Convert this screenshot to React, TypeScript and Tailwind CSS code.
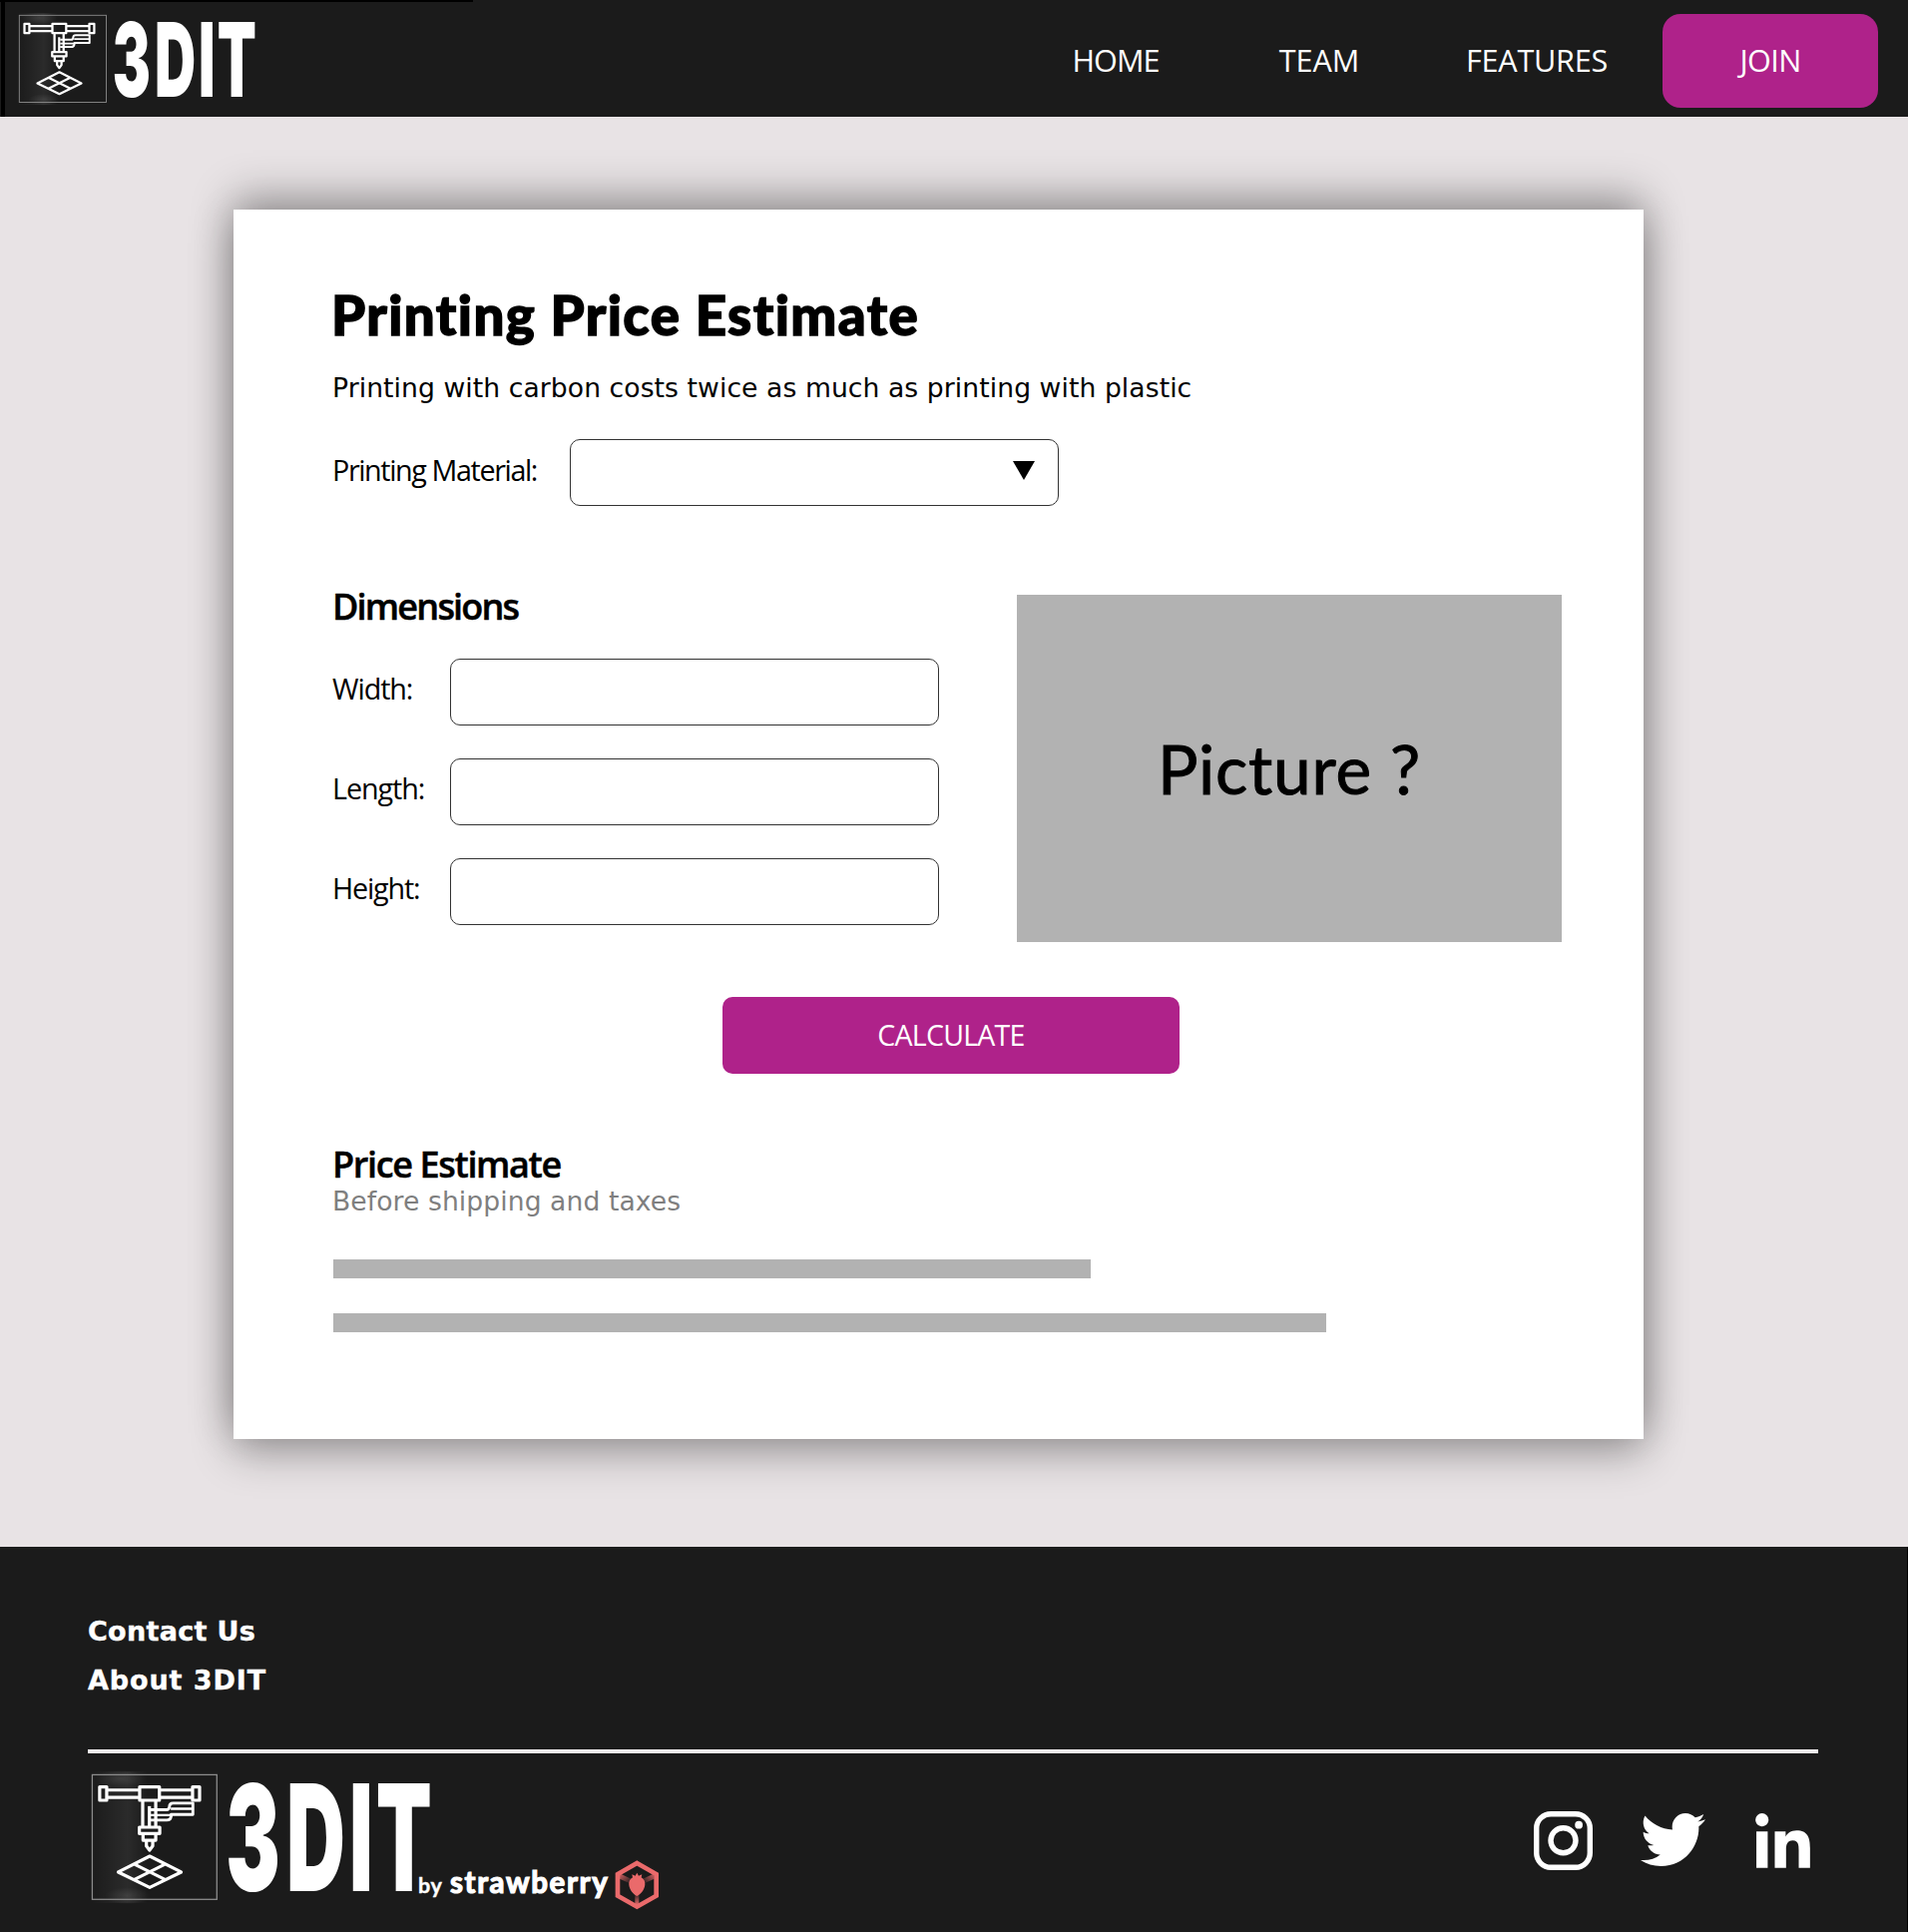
import { FaLinkedinIn, FaTwitter } from "react-icons/fa";

/** Printer emblem followed by the condensed wordmark, drawn in an 88 x 236 unit space. */
function LogoMark({ id }: { id: string }) {
  return (
    <g>
      <defs>
        <linearGradient id={`${id}-glow`} x1="0" x2="1" y1="0" y2="0">
          <stop offset="0" stopColor="#fff" stopOpacity="0" />
          <stop offset="0.65" stopColor="#fff" stopOpacity="0.07" />
          <stop offset="1" stopColor="#fff" stopOpacity="0" />
        </linearGradient>
        <radialGradient id={`${id}-spot`}>
          <stop offset="0" stopColor="#fff" stopOpacity="0.1" />
          <stop offset="1" stopColor="#fff" stopOpacity="0" />
        </radialGradient>
      </defs>
      <rect x="-1" y="-2" width="40" height="92" fill={`url(#${id}-glow)`} />
      <ellipse cx="20" cy="3" rx="18" ry="6" fill={`url(#${id}-spot)`} />
      <ellipse cx="25" cy="85" rx="16" ry="6" fill={`url(#${id}-spot)`} />
      <rect x="0.3" y="0.3" width="87.2" height="87.2" fill="none" stroke="#8c8c8c" strokeWidth="0.9" />
      <g
        transform="scale(0.2342) translate(-24 -27)"
        fill="none"
        stroke="#fff"
        strokeWidth="9.6"
        strokeLinejoin="round"
      >
        <rect x="47.5" y="64.5" width="21" height="40" />
        <rect x="325" y="64.5" width="21" height="40" />
        <rect x="167" y="64.5" width="59" height="40" />
        <path d="M70 74H167M70 96H167M226 74H325M226 96H325" />
        <path d="M176 106V184M215 106V184" />
        <path d="M196 122V184" strokeWidth="9.500" />
        <path d="M200 133H246Q256 133 256 123Q256 113 267 113H326V147H261V153Q259 164 248 164H200" strokeWidth="8.500" />
        <path d="M200 149H262M260 130H326" strokeWidth="7" />
        <rect x="166" y="185" width="61" height="19" />
        <path d="M177 206V224H215V206" />
        <path d="M187 226V241L196.500 254L206 241V226" />
        <path d="M103 319L197 271.500L291 319L197 365ZM150 295L244 342M244 295L150 342" />
      </g>
      <g transform="translate(0 81.7) scale(0.55 1)">
        <text
          x="170.500 247.500 327.500 361.500"
          y="0"
          fill="#fff"
          fontFamily="Inter, sans-serif"
          fontWeight="900"
          fontSize="103.500"
        >
          3DIT
        </text>
      </g>
    </g>
  );
}

function HeaderLogo() {
  return (
    <svg className="h-[90px] w-[240px] overflow-visible" viewBox="0 0 240 90" aria-label="3DIT">
      <LogoMark id="top" />
    </svg>
  );
}

function FooterLogo() {
  return (
    <svg className="h-[142px] w-[568px] overflow-visible" viewBox="0 0 568 142" aria-label="3DIT by strawberry">
      <defs>
        <linearGradient id="spoke-l" x1="1" x2="0" y1="1" y2="0">
          <stop offset="0" stopColor="#ea6a6b" stopOpacity="0" />
          <stop offset="1" stopColor="#ea6a6b" stopOpacity="0.9" />
        </linearGradient>
        <linearGradient id="spoke-r" x1="0" x2="1" y1="1" y2="0">
          <stop offset="0" stopColor="#ea6a6b" stopOpacity="0" />
          <stop offset="1" stopColor="#ea6a6b" stopOpacity="0.9" />
        </linearGradient>
        <linearGradient id="spoke-b" x1="0" x2="0" y1="0" y2="1">
          <stop offset="0" stopColor="#ea6a6b" stopOpacity="0.2" />
          <stop offset="1" stopColor="#ea6a6b" />
        </linearGradient>
      </defs>
      <g transform="scale(1.432)">
        <LogoMark id="bottom" />
      </g>
      <g fill="#fff" fontFamily="Lato, sans-serif" fontWeight="700">
        <text x="327" y="118.700" fontSize="21.500" letterSpacing="0.6" stroke="#fff" strokeWidth="0.4">
          by
        </text>
        <text x="359" y="118.700" fontSize="29.500" letterSpacing="1.600" stroke="#fff" strokeWidth="1.2">
          strawberry
        </text>
      </g>
      <g transform="translate(319 72) scale(0.3333)">
        <path
          d="M682 51L740 84V149L682 182L624 149V84Z"
          fill="none"
          stroke="#ea6a6b"
          strokeWidth="14"
          strokeLinejoin="miter"
        />
        <path d="M630 82L664 98L660 112L630 98Z" fill="url(#spoke-l)" />
        <path d="M734 82L700 98L704 112L734 98Z" fill="url(#spoke-r)" />
        <path d="M676 146H688V178H676Z" fill="url(#spoke-b)" />
        <path
          d="M682 80L687 89L697 85L695 94C704 99 707 107 706 116C704 132 693 144 682 150C671 144 660 132 658 116C657 107 660 99 669 94L667 85L677 89Z"
          fill="#ea6a6b"
        />
      </g>
    </svg>
  );
}

function Instagram() {
  return (
    <svg className="size-[59px]" viewBox="0 0 59 59" fill="none" stroke="#fff" strokeWidth="5.400">
      <rect x="2.700" y="2.700" width="53.600" height="53.600" rx="14.500" />
      <circle cx="29.500" cy="29.200" r="12.500" />
      <circle cx="45.100" cy="13.700" r="3.900" fill="#fff" stroke="none" />
    </svg>
  );
}

const navText = "font-['Open_Sans',sans-serif] text-[30.6px] leading-[42px] text-white whitespace-nowrap pb-[2px]";
const labelText = "mt-[10px] font-['Open_Sans',sans-serif] text-[28.7px] leading-[40px] whitespace-nowrap";
const sectionTitle =
  "font-['Open_Sans',sans-serif] text-[36px] leading-[50px] font-semibold [-webkit-text-stroke:0.5px_black]";
const bodyText = "font-['DejaVu_Sans',sans-serif] text-[26.6px] leading-[36px] tracking-[0.08px]";

const dimensions = [
  { label: "Width:", tracking: "tracking-[-1.05px]" },
  { label: "Length:", tracking: "tracking-[-1.05px]" },
  { label: "Height:", tracking: "tracking-[-1.15px]" },
];

export default function App() {
  return (
    <div className="flex h-[1936px] w-[1912px] flex-col overflow-hidden bg-[#e8e3e5] text-black">
      <header className="relative flex h-[117px] shrink-0 items-start justify-between bg-[#1b1b1b] pr-[30px] pl-[19px]">
        <div className="absolute top-0 left-0 h-[2px] w-[474px] bg-black" />
        <div className="absolute top-0 left-px h-full w-[4px] bg-black" />
        <div className="pt-[15px]">
          <HeaderLogo />
        </div>
        <nav className="flex items-center pt-[14px]">
          <a className={`${navText} w-[200px] text-center tracking-[-1px]`}>HOME</a>
          <a className={`${navText} w-[208px] text-center`}>TEAM</a>
          <a className={`${navText} w-[228px] text-center tracking-[-0.25px]`}>FEATURES</a>
          <a
            className={`${navText} ml-[12px] flex h-[94px] w-[216px] items-center justify-center rounded-[18px] bg-[#af228a] tracking-[-0.6px]`}
          >
            JOIN
          </a>
        </nav>
      </header>

      <main className="h-[1433px] shrink-0 pt-[93px] pl-[234px]">
        <section className="h-[1232px] w-[1413px] bg-white pt-[71px] pl-[99px] shadow-[0_-14px_40px_rgba(0,0,0,0.3),0_14px_40px_rgba(0,0,0,0.3)]">
          <h1 className="-ml-px font-['Lato',sans-serif] text-[54.6px] leading-[68px] font-black tracking-[1.4px] [-webkit-text-stroke:1.4px_black]">
            Printing Price Estimate
          </h1>
          <p className={`${bodyText} mt-[22px]`}>
            Printing with carbon costs twice as much as printing with plastic
          </p>

          <div className="mt-[33px] flex h-[67px] items-start">
            <label className={`${labelText} w-[238px] pt-px tracking-[-1.37px]`}>Printing Material:</label>
            <div className="flex h-[67px] w-[490px] items-start justify-end rounded-[10px] border border-[#333] pt-[21px] pr-[23px]">
              <svg className="h-[19px] w-[22px]" viewBox="0 0 22 19">
                <path d="M0 0H22L11 19Z" fill="#000" />
              </svg>
            </div>
          </div>

          <div className="mt-[75px] flex items-start">
            <div>
              <h2 className={`${sectionTitle} pt-px tracking-[-1.8px]`}>Dimensions</h2>
              <div className="mt-[27px] flex flex-col gap-[33px]">
                {dimensions.map((d) => (
                  <div key={d.label} className="flex h-[67px] items-start">
                    <label className={`${labelText} ${d.tracking} w-[118px]`}>{d.label}</label>
                    <div className="h-[67px] w-[490px] rounded-[10px] border border-[#333]" />
                  </div>
                ))}
              </div>
            </div>
            <div className="mt-[14px] ml-[78px] flex h-[348px] w-[546px] items-center justify-center bg-[#b2b2b2] font-['Lato',sans-serif] text-[67.5px] leading-[82px] tracking-[0.8px] [-webkit-text-stroke:1px_black]">
              Picture ?
            </div>
          </div>

          <button className="mt-[55px] ml-[391px] flex h-[77px] w-[458px] items-center justify-center rounded-[10px] bg-[#af228a] pb-px font-['Open_Sans',sans-serif] text-[28.5px] leading-[39px] tracking-[-0.75px] text-white">
            CALCULATE
          </button>

          <h2 className={`${sectionTitle} mt-[65px] pt-px tracking-[-1.35px]`}>Price Estimate</h2>
          <p className={`${bodyText} -mt-[6px] text-[#7f7f7f]`}>Before shipping and taxes</p>
          <div className="mt-[40px] ml-px h-[19px] w-[759px] bg-[#b2b2b2]" />
          <div className="mt-[35px] ml-px h-[19px] w-[995px] bg-[#b2b2b2]" />
        </section>
      </main>

      <footer className="h-[386px] shrink-0 border-r border-black bg-[#1b1b1b] pt-[60px] pr-[89px] pl-[88px] text-white">
        <div className="flex flex-col font-['DejaVu_Sans',sans-serif] text-[27px] leading-[49px] font-bold [-webkit-text-stroke:0.4px_white]">
          <a className="tracking-[0.3px]">Contact Us</a>
          <a className="tracking-[0.9px]">About 3DIT</a>
        </div>
        <div className="mt-[45px] h-[4px] bg-[#efecee]" />
        <div className="mt-[21px] flex items-start justify-between pr-[8px] pl-[3.5px]">
          <FooterLogo />
          <div className="flex items-start pt-[37px]">
            <Instagram />
            <FaTwitter className="mt-[-4px] ml-[48px] size-[65px]" />
            <FaLinkedinIn className="mt-[2px] ml-[50px] h-[62.5px] w-[55px]" />
          </div>
        </div>
      </footer>
    </div>
  );
}
